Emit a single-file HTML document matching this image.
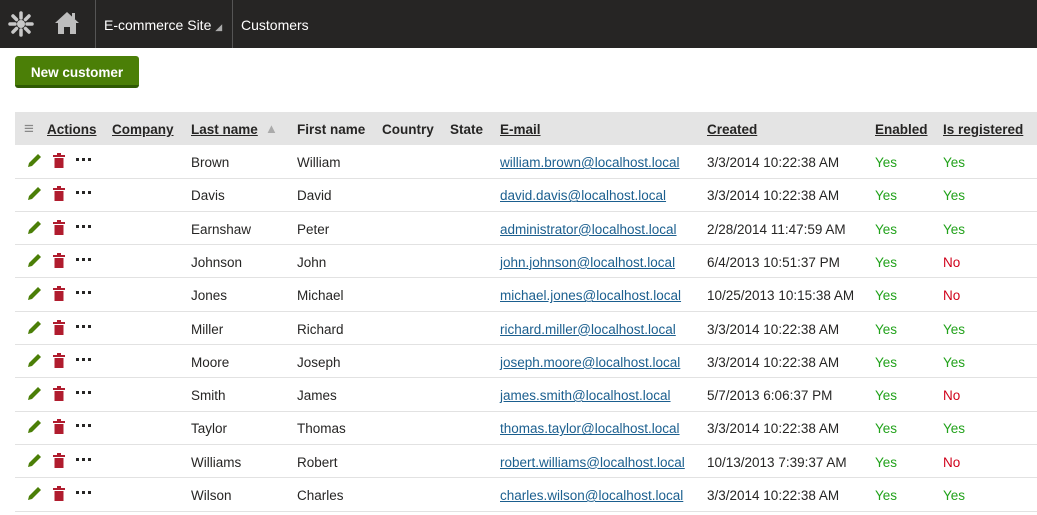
<!DOCTYPE html><html><head><style>
body{margin:0;width:1037px;height:515px;overflow:hidden;background:#fff;font-family:"Liberation Sans",sans-serif;font-size:13.5px;color:#262524;position:relative}
.nav{position:absolute;left:0;top:0;width:1037px;height:48px;background:#262524;color:#fff}
.nav .sep{position:absolute;top:0;width:1px;height:48px;background:#555}
.nav span{position:absolute;top:17px;font-size:14px}
.btn{position:absolute;left:15px;top:56px;width:124px;height:29px;background:#4b7f07;border-bottom:3px solid #2f5a03;border-radius:3px;color:#fff;font-weight:bold;font-size:13.5px;text-align:center;line-height:34px}
.hdr{position:absolute;left:15px;top:112px;width:1022px;height:33px;background:#e4e4e4}
.c{position:absolute;white-space:nowrap}
.h{font-weight:bold;text-decoration:underline;top:122px}
.line{position:absolute;left:15px;width:1022px;height:1px;background:#e2e2e2}
a{color:#1b5f8f;text-decoration:underline}
.y{color:#22a21b}.n{color:#d0021b}
</style></head><body>
<div class="nav">
<svg style="position:absolute;left:7px;top:10px" width="28" height="28" viewBox="0 0 28 28"><g fill="#c8c8c8"><circle cx="14" cy="14" r="4"/><g stroke="#c8c8c8" stroke-width="3.5" stroke-linecap="round"><line x1="14" y1="3" x2="14" y2="8"/><line x1="14" y1="20" x2="14" y2="25"/><line x1="3" y1="14" x2="8" y2="14"/><line x1="20" y1="14" x2="25" y2="14"/><line x1="6" y1="6" x2="9.5" y2="9.5"/><line x1="18.5" y1="18.5" x2="22" y2="22"/><line x1="6" y1="22" x2="9.5" y2="18.5"/><line x1="18.5" y1="9.5" x2="22" y2="6"/></g></g></svg>
<svg style="position:absolute;left:54px;top:11px" width="26" height="24" viewBox="0 0 26 24"><path d="M13 1 L1 12 L4 12 L4 23 L10 23 L10 16 L16 16 L16 23 L22 23 L22 12 L25 12 Z" fill="#bdbdbd"/><rect x="18" y="2" width="3" height="6" fill="#bdbdbd"/></svg>
<div class="sep" style="left:95px"></div>
<span style="left:104px">E-commerce Site <small style="font-size:9px;color:#aaa">◢</small></span>
<div class="sep" style="left:232px"></div>
<span style="left:241px">Customers</span>
</div>
<div class="btn">New customer</div>
<div class="hdr"></div>
<div class="c" style="left:24px;top:119px;color:#888;font-size:17px">≡</div>
<div class="c h" style="left:47px">Actions</div>
<div class="c h" style="left:112px">Company</div>
<div class="c h" style="left:191px">Last name</div>
<div class="c" style="left:265px;top:121px;color:#aaa;font-size:13px">▲</div>
<div class="c" style="left:297px;top:122px;font-weight:bold">First name</div>
<div class="c" style="left:382px;top:122px;font-weight:bold">Country</div>
<div class="c" style="left:450px;top:122px;font-weight:bold">State</div>
<div class="c h" style="left:500px">E-mail</div>
<div class="c h" style="left:707px">Created</div>
<div class="c h" style="left:875px">Enabled</div>
<div class="c h" style="left:943px">Is registered</div>
<div id="rows"></div>
<script>
var d=[["Brown","William","william.brown@localhost.local","3/3/2014 10:22:38 AM",1],["Davis","David","david.davis@localhost.local","3/3/2014 10:22:38 AM",1],["Earnshaw","Peter","administrator@localhost.local","2/28/2014 11:47:59 AM",1],["Johnson","John","john.johnson@localhost.local","6/4/2013 10:51:37 PM",0],["Jones","Michael","michael.jones@localhost.local","10/25/2013 10:15:38 AM",0],["Miller","Richard","richard.miller@localhost.local","3/3/2014 10:22:38 AM",1],["Moore","Joseph","joseph.moore@localhost.local","3/3/2014 10:22:38 AM",1],["Smith","James","james.smith@localhost.local","5/7/2013 6:06:37 PM",0],["Taylor","Thomas","thomas.taylor@localhost.local","3/3/2014 10:22:38 AM",1],["Williams","Robert","robert.williams@localhost.local","10/13/2013 7:39:37 AM",0],["Wilson","Charles","charles.wilson@localhost.local","3/3/2014 10:22:38 AM",1]];
var h="";
d.forEach(function(r,i){var y=145+i*33.3,t=y+10;
h+='<svg class="c" style="left:27px;top:'+(y+8)+'px" width="15" height="15" viewBox="0 0 15 15"><path d="M1 14 L2 10 L11 1 L14 4 L5 13 Z" fill="#4b7f07"/></svg>';
h+='<svg class="c" style="left:53px;top:'+(y+8)+'px" width="12" height="16" viewBox="0 0 12 16"><rect x="0" y="2" width="12" height="2" fill="#b01c2e"/><rect x="4" y="0" width="4" height="2" fill="#b01c2e"/><rect x="1.5" y="5" width="9" height="10" fill="#b01c2e"/></svg>';
h+='<svg class="c" style="left:76px;top:'+(y+13)+'px" width="15" height="4"><rect x="0" y="0" width="3" height="3" fill="#262524"/><rect x="6" y="0" width="3" height="3" fill="#262524"/><rect x="12" y="0" width="3" height="3" fill="#262524"/></svg>';
h+='<div class="c" style="left:191px;top:'+t+'px">'+r[0]+'</div><div class="c" style="left:297px;top:'+t+'px">'+r[1]+'</div><div class="c" style="left:500px;top:'+t+'px"><a>'+r[2]+'</a></div><div class="c" style="left:707px;top:'+t+'px">'+r[3]+'</div><div class="c y" style="left:875px;top:'+t+'px">Yes</div><div class="c '+(r[4]?'y':'n')+'" style="left:943px;top:'+t+'px">'+(r[4]?'Yes':'No')+'</div><div class="line" style="top:'+(y+32.5)+'px"></div>';});
document.getElementById("rows").innerHTML=h;
</script>
</body></html>
